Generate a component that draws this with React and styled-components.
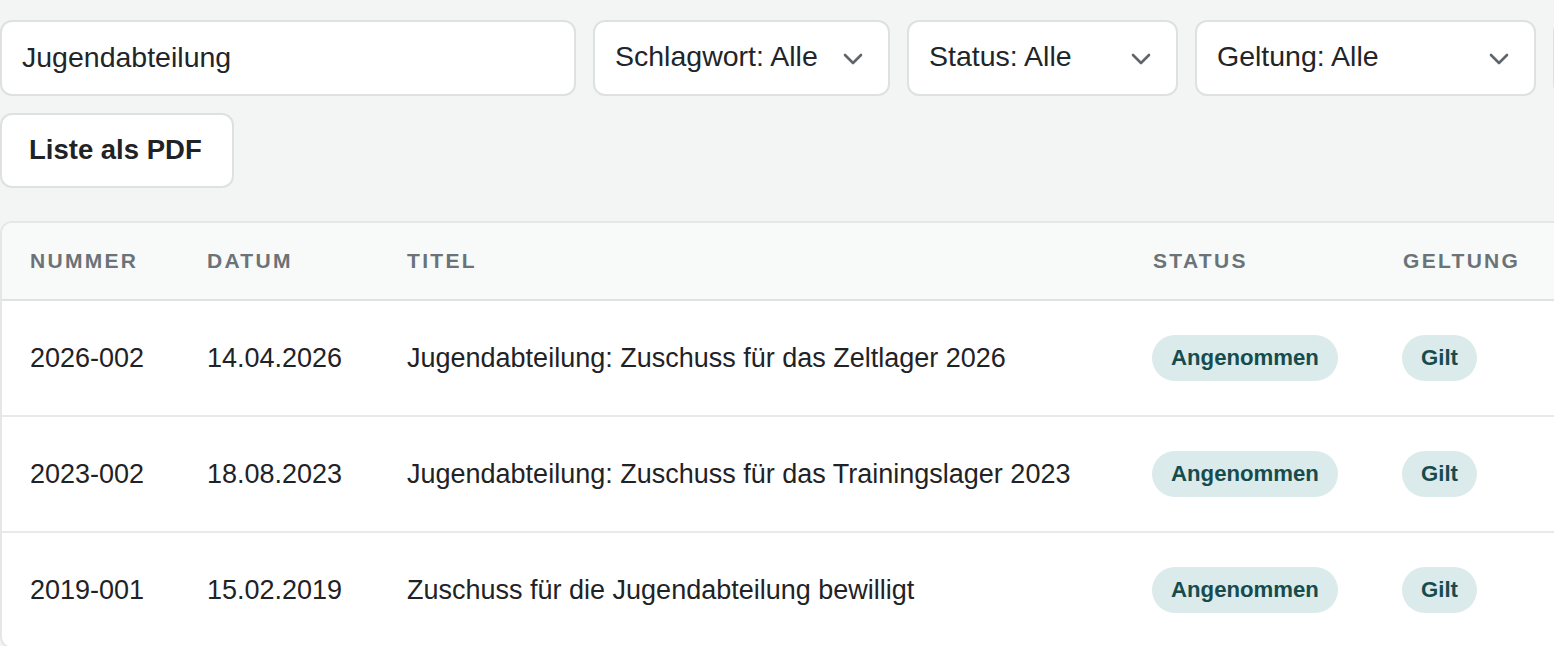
import React from "react";
import styled, { createGlobalStyle } from "styled-components";

const rows = [
  {
    nummer: "2026-002",
    datum: "14.04.2026",
    titel: "Jugendabteilung: Zuschuss für das Zeltlager 2026",
    status: "Angenommen",
    geltung: "Gilt",
  },
  {
    nummer: "2023-002",
    datum: "18.08.2023",
    titel: "Jugendabteilung: Zuschuss für das Trainingslager 2023",
    status: "Angenommen",
    geltung: "Gilt",
  },
  {
    nummer: "2019-001",
    datum: "15.02.2019",
    titel: "Zuschuss für die Jugendabteilung bewilligt",
    status: "Angenommen",
    geltung: "Gilt",
  },
];

const filters = [
  { label: "Schlagwort: Alle", width: 297 },
  { label: "Status: Alle", width: 271 },
  { label: "Geltung: Alle", width: 341 },
  { label: "Jahr: Alle", width: 260 },
];

function Chevron() {
  return (
    <svg width="20" height="12" viewBox="0 0 20 12" fill="none">
      <path
        d="M2 2l8 8 8-8"
        stroke="#5f666b"
        strokeWidth="2.6"
        strokeLinecap="round"
        strokeLinejoin="round"
      />
    </svg>
  );
}

export default function App() {
  return (
    <>
      <GlobalStyle />
      <Page>
        <Toolbar>
          <SearchInput defaultValue="Jugendabteilung" />
          {filters.map((f) => (
            <Select key={f.label} w={f.width}>
              <span>{f.label}</span>
              <Chevron />
            </Select>
          ))}
        </Toolbar>
        <Actions>
          <PdfButton>Liste als PDF</PdfButton>
        </Actions>

        <Card>
          <Table>
            <colgroup>
              <col style={{ width: 177 }} />
              <col style={{ width: 200 }} />
              <col style={{ width: 746 }} />
              <col style={{ width: 250 }} />
              <col />
            </colgroup>
            <thead>
              <tr>
                <Th>Nummer</Th>
                <Th>Datum</Th>
                <Th>Titel</Th>
                <Th>Status</Th>
                <Th>Geltung</Th>
              </tr>
            </thead>
            <tbody>
              {rows.map((r) => (
                <Row key={r.nummer}>
                  <Td>{r.nummer}</Td>
                  <Td>{r.datum}</Td>
                  <Td>{r.titel}</Td>
                  <Td>
                    <Badge>{r.status}</Badge>
                  </Td>
                  <Td>
                    <Badge>{r.geltung}</Badge>
                  </Td>
                </Row>
              ))}
            </tbody>
          </Table>
        </Card>
      </Page>
    </>
  );
}

const GlobalStyle = createGlobalStyle`
  html, body {
    margin: 0;
    padding: 0;
    background: #f3f5f4;
    overflow: hidden;
  }
  body {
    font-family: "Liberation Sans", Arial, sans-serif;
    color: #212529;
  }
`;

const Page = styled.div`
  width: 1700px;
  padding: 20px 0 0 0;
  display: flex;
  flex-direction: column;
`;

const Toolbar = styled.div`
  display: flex;
  gap: 17px;
  align-items: stretch;
  & > * {
    flex-shrink: 0;
  }
`;

const SearchInput = styled.input`
  box-sizing: border-box;
  width: 576px;
  height: 76px;
  padding: 0 20px 2px 20px;
  border: 2px solid #dde1e0;
  border-radius: 12px;
  background: #fff;
  font-family: inherit;
  font-size: 28.5px;
  color: #212529;
  outline: none;
`;

const Select = styled.div`
  box-sizing: border-box;
  width: ${(props) => props.w}px;
  height: 76px;
  padding: 0 25px 3px 20px;
  border: 2px solid #dde1e0;
  border-radius: 12px;
  background: #fff;
  display: flex;
  align-items: center;
  justify-content: space-between;
  font-size: 28.5px;
  color: #212529;
  svg {
    margin-top: 4px;
  }
`;

const Actions = styled.div`
  display: flex;
  margin-top: 17px;
`;

const PdfButton = styled.button`
  box-sizing: border-box;
  height: 75px;
  width: 234px;
  padding: 0 27px 2px 27px;
  border: 2px solid #dde1e0;
  border-radius: 12px;
  background: #fff;
  font-family: inherit;
  font-size: 27.5px;
  font-weight: 700;
  color: #1f2326;
  text-align: left;
`;

const Card = styled.div`
  margin-top: 33px;
  background: #fff;
  border: 2px solid #e4e7e6;
  border-radius: 12px;
  overflow: hidden;
  width: 1680px;
`;

const Table = styled.table`
  width: 100%;
  border-collapse: collapse;
  table-layout: fixed;
`;

const Th = styled.th`
  height: 76px;
  padding: 0 28px;
  background: #f8faf9;
  border-bottom: 2px solid #dee2e1;
  text-align: left;
  font-size: 21px;
  font-weight: 700;
  letter-spacing: 2.3px;
  text-transform: uppercase;
  color: #6b7378;
`;

const Row = styled.tr`
  & + & td {
    border-top: 2px solid #e8eaea;
  }
`;

const Td = styled.td`
  height: 114px;
  padding: 0 28px;
  font-size: 27px;
  color: #1f2326;
  white-space: nowrap;
  vertical-align: middle;
`;

const Badge = styled.span`
  display: inline-flex;
  align-items: center;
  height: 46px;
  padding: 0 19px;
  border-radius: 23px;
  background: #dbeaea;
  color: #164c4d;
  font-size: 22.2px;
  font-weight: 700;
  margin-left: -1px;
`;
